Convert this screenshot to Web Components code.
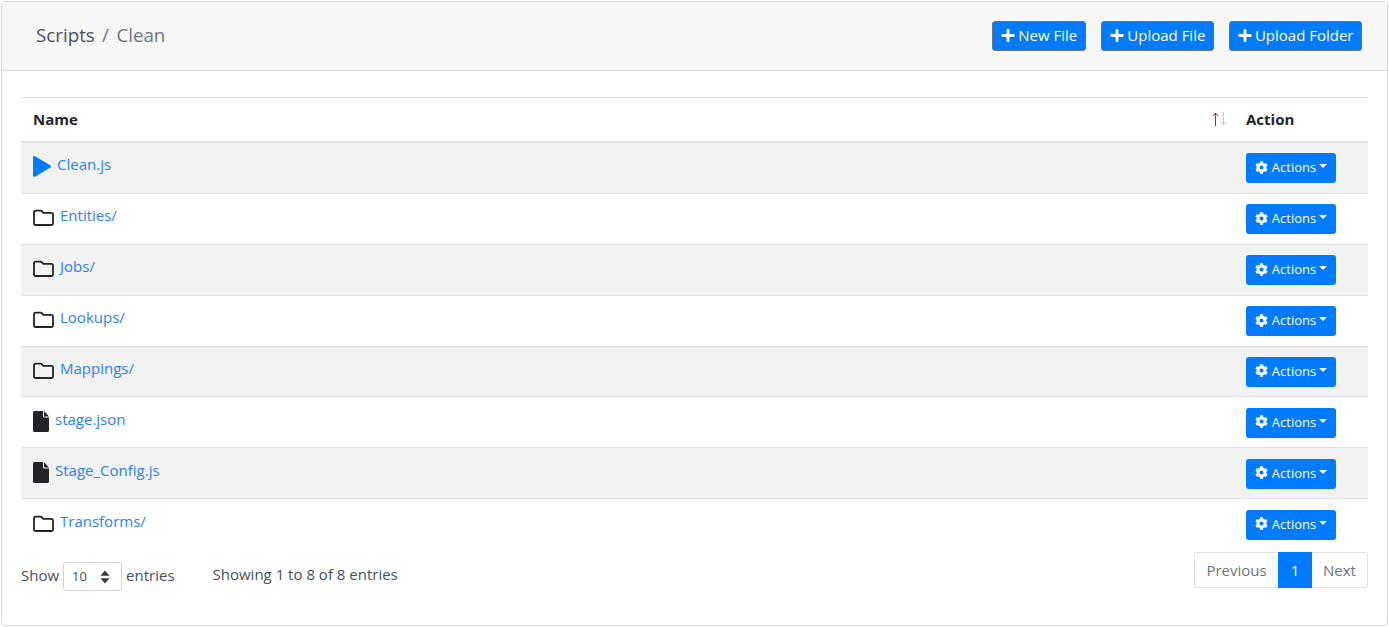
<!DOCTYPE html>
<html>
<head>
<meta charset="utf-8">
<style>
  html, body { margin: 0; height: 100%; background: #fff; }
  body { font-family: "Open Sans", sans-serif; color: #212529; }
</style>
</head>
<body>
<template id="tpl-btn">
  <style>
    :host { display: inline-flex; align-items: center; justify-content: center; height: 30px; padding: 0 8px; gap: 3px; box-sizing: border-box;
      background: #007bff; color: #fff; border: 1px solid #6c757d; border-radius: 3px; font-size: 15px; line-height: 1; white-space: nowrap; }
    :host(:last-child) { padding: 0 7.500px; }
    svg { width: 14px; height: 15px; fill: #fff; margin-bottom: 2px; }
    span { margin-bottom: 2px; }
  </style>
  <svg viewBox="0 0 448 512"><path d="M416 208H272V64c0-17.670-14.330-32-32-32h-32c-17.670 0-32 14.330-32 32v144H32c-17.670 0-32 14.330-32 32v32c0 17.670 14.330 32 32 32h144v144c0 17.670 14.330 32 32 32h32c17.670 0 32-14.330 32-32V304h144c17.670 0 32-14.330 32-32v-32c0-17.670-14.330-32-32-32z"/></svg>
  <span><slot></slot></span>
</template>

<template id="tpl-actions">
  <style>
    :host { display: inline-flex; align-items: center; justify-content: center; width: 90px; height: 30px; box-sizing: border-box; gap: 4px;
      background: #007bff; color: #fff; border-radius: 3px; font-size: 13px; white-space: nowrap; }
    svg { width: 13px; height: 13px; fill: #fff; margin-bottom: 2px; }
    span { margin-bottom: 2px; }
    i { display: inline-block; margin-left: -1px; margin-top: -4px; border-top: 4px solid #fff; border-left: 4px solid transparent; border-right: 4px solid transparent; }
  </style>
  <svg viewBox="0 0 512 512"><path d="M487.400 315.700l-42.600-24.600c4.300-23.200 4.300-47 0-70.200l42.600-24.600c4.900-2.800 7.100-8.600 5.500-14-11.100-35.600-30-67.800-54.700-94.600-3.800-4.100-10-5.100-14.800-2.300L380.800 110c-17.900-15.400-38.500-27.300-60.800-35.100V25.800c0-5.600-3.900-10.500-9.400-11.700-36.700-8.200-74.300-7.800-109.200 0-5.500 1.200-9.400 6.100-9.400 11.700V75c-22.200 7.900-42.800 19.800-60.800 35.100L88.700 85.500c-4.900-2.800-11-1.900-14.800 2.300-24.700 26.700-43.600 58.900-54.700 94.600-1.700 5.400.6 11.200 5.500 14L67.300 221c-4.300 23.200-4.300 47 0 70.200l-42.600 24.600c-4.900 2.800-7.100 8.600-5.500 14 11.100 35.600 30 67.800 54.700 94.600 3.800 4.100 10 5.100 14.800 2.300l42.600-24.600c17.900 15.400 38.500 27.300 60.800 35.100v49.200c0 5.600 3.900 10.500 9.400 11.700 36.700 8.200 74.300 7.800 109.200 0 5.500-1.200 9.400-6.100 9.400-11.700v-49.200c22.200-7.900 42.800-19.800 60.800-35.100l42.600 24.600c4.900 2.800 11 1.900 14.800-2.300 24.700-26.700 43.600-58.900 54.700-94.600 1.500-5.500-.7-11.300-5.600-14.100zM256 336c-44.100 0-80-35.900-80-80s35.900-80 80-80 80 35.900 80 80-35.900 80-80 80z"/></svg>
  <span><slot></slot></span><i></i>
</template>

<template id="tpl-row">
  <style>
    :host { display: flex; height: 50.880px; box-sizing: border-box; border-bottom: 1px solid #dee2e6; padding-left: 12px; }
    :host([odd]) { background: #f2f2f2; }
    :host([last]) { border-bottom: 0; }
    .name { flex: 1; display: flex; align-items: flex-start; padding-top: 11.400px; gap: 6px; font-size: 15px; color: #2a7fff; }
    .name span { line-height: 20px; }
    .icon { display: flex; width: 21px; height: 21px; align-items: center; margin-top: 2px; }
    .icon.f { width: 16px; }
    .icon.p { width: 18px; }
    .act { width: 122px; padding-top: 10.400px; }
    svg { display: block; }
  </style>
  <div class="name"><div class="icon"></div><span><slot></slot></span></div>
  <div class="act"><x-actions>Actions</x-actions></div>
</template>

<template id="tpl-table">
  <style>
    :host { display: block; margin: 26px 19px 0 19px; border-top: 1px solid #dee2e6; }
    .head { display: flex; align-items: center; height: 45px; box-sizing: border-box; border-bottom: 2px solid #dee2e6; padding: 0 0 2px 12px; font-size: 15px; font-weight: 700; }
    .head .n { flex: 1; }
    .sort { width: 25px; margin-right: 10px; display: flex; }
    .head .a { width: 122px; }
  </style>
  <div class="head"><div class="n">Name</div>
    <svg class="sort" width="25" height="16" viewBox="0 0 25 16"><path fill="none" stroke="#8a2b58" d="M4.500 15V2M1.800 5l2.700-3 2.700 3"/><path fill="none" stroke="#c4c8cc" d="M12.500 1v13M9.800 11l2.700 3 2.700-3"/></svg>
    <div class="a">Action</div></div>
  <slot></slot>
</template>

<template id="tpl-foot">
  <style>
    :host { display: flex; justify-content: space-between; margin: 0 19px; font-size: 15px; color: #495057; }
    .left { display: flex; align-items: center; height: 29px; margin-top: 12px; }
    .left > span { margin-bottom: 4px; }
    .left > .sel { display: inline-flex; align-items: center; justify-content: space-between; box-sizing: border-box; width: 59px; height: 29px; margin: 0 4px; padding: 0 11px 0 8px; border: 1px solid #ced4da; border-radius: 3px; font-size: 13px; }
    .sel span { margin-bottom: 2px; }
    .left > .info { margin-left: 38px; margin-bottom: 5px; }
    .pg { display: flex; height: 36px; margin-top: 2px; }
    .pg div { display: flex; align-items: center; justify-content: center; border: 1px solid #dee2e6; color: #6c757d; box-sizing: border-box; }
    .pg .first { width: 84px; border-radius: 3px 0 0 3px; border-right: 0; }
    .pg .cur { width: 34px; background: #007bff; color: #fff; border-color: #007bff; }
    .pg .last { width: 56px; border-radius: 0 3px 3px 0; border-left: 0; }
    svg { width: 10px; height: 14px; fill: #343a40; }
  </style>
  <div class="left"><span>Show</span><span class="sel"><span>10</span><svg viewBox="0 0 10 14"><path d="M5 .5l4.500 5.300H.5zM5 13.500L.5 8.200h9z"/></svg></span><span>entries</span><span class="info">Showing 1 to 8 of 8 entries</span></div>
  <div class="pg"><div class="first">Previous</div><div class="cur">1</div><div class="last">Next</div></div>
</template>

<template id="tpl-card">
  <style>
    :host { display: block; margin: 1px 1px 0 1px; height: 625px; box-sizing: border-box; border: 1px solid #d9d9d9; border-radius: 4px; overflow: hidden; }
    .top { display: flex; align-items: center; height: 69px; box-sizing: border-box; background: #f7f7f7; border-bottom: 1px solid #dcdcdc; padding: 0 25px 0 34px; }
    .crumb { flex: 1; font-size: 18.750px; color: #6c757d; margin-bottom: 4px; }
    .crumb b { font-weight: 400; color: #495057; }
    .crumb i { font-style: normal; margin: 0 2.500px; }
    .btns { display: flex; gap: 15px; }
  </style>
  <div class="top">
    <div class="crumb"><b>Scripts</b><i> / </i>Clean</div>
    <div class="btns"><x-btn>New File</x-btn><x-btn>Upload File</x-btn><x-btn>Upload Folder</x-btn></div>
  </div>
  <slot></slot>
</template>

<x-card>
  <x-table>
    <x-row odd kind="play">Clean.js</x-row>
    <x-row kind="folder">Entities/</x-row>
    <x-row odd kind="folder">Jobs/</x-row>
    <x-row kind="folder">Lookups/</x-row>
    <x-row odd kind="folder">Mappings/</x-row>
    <x-row kind="file">stage.json</x-row>
    <x-row odd kind="file">Stage_Config.js</x-row>
    <x-row kind="folder" last>Transforms/</x-row>
  </x-table>
  <x-foot></x-foot>
</x-card>

<script>
  const icons = {
    play: '<svg width="18" height="21" viewBox="0 0 18 21"><path fill="#007bff" d="M0 1.500C0 .4 1 -.2 2 .3l15.300 9c.9.500.9 1.800 0 2.300L2 20.700c-1 .5-2-.1-2-1.200z"/></svg>',
    folder: '<svg width="21" height="17" viewBox="0 0 21 17"><path fill="none" stroke="#212529" stroke-width="1.800" d="M1 3.500C1 2.400 1.800 1.700 2.800 1.700h4.700c.8 0 1.200.3 1.700.9l1 1.200h8c1 0 1.800.8 1.800 1.800v8.600c0 1-.8 1.800-1.800 1.800H2.800c-1 0-1.800-.8-1.800-1.800z"/></svg>',
    file: '<svg width="16" height="21" viewBox="0 0 16 21"><path fill="#212529" d="M1.500 0H10v5.200c0 .7.600 1.300 1.300 1.300H16v13c0 .8-.7 1.500-1.500 1.500h-13C.7 21 0 20.300 0 19.500v-18C0 .7.700 0 1.500 0zM11 0l5 5.500h-5z"/></svg>'
  };

  // petit helper pour cloner un template dans le shadow root
  function simple(name, tplId) {
    customElements.define(name, class extends HTMLElement {
      constructor() {
        super();
        this.attachShadow({ mode: "open" });
        this.shadowRoot.appendChild(document.getElementById(tplId).content.cloneNode(true));
      }
    });
  }

  simple("x-btn", "tpl-btn");
  simple("x-actions", "tpl-actions");
  simple("x-table", "tpl-table");
  simple("x-foot", "tpl-foot");
  simple("x-card", "tpl-card");

  class XRow extends HTMLElement {
    constructor() {
      super();
      this.attachShadow({ mode: "open" });
      this.shadowRoot.appendChild(document.getElementById("tpl-row").content.cloneNode(true));
    }
    connectedCallback() {
      const kind = this.getAttribute("kind");
      const box = this.shadowRoot.querySelector(".icon");
      box.innerHTML = icons[kind];
      if (kind === "file") box.classList.add("f");
      if (kind === "play") box.classList.add("p");
    }
  }
  customElements.define("x-row", XRow);
</script>
</body>
</html>
